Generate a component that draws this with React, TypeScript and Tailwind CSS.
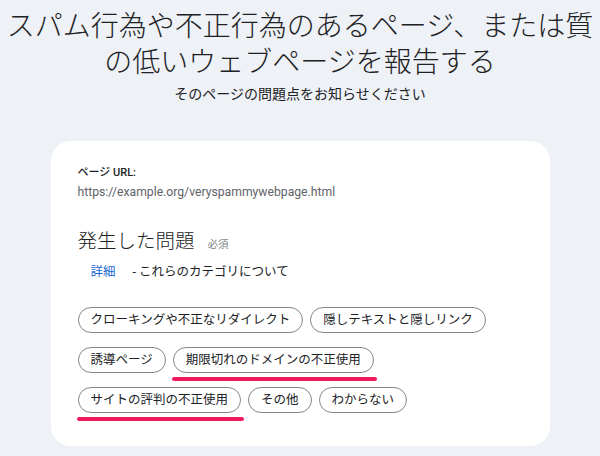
const categories = [
    { label: 'クローキングや不正なリダイレクト' },
    { label: '隠しテキストと隠しリンク' },
    { label: '誘導ページ' },
    { label: '期限切れのドメインの不正使用', marked: true },
    { label: 'サイトの評判の不正使用', marked: true },
    { label: 'その他' },
    { label: 'わからない' },
];

function Chip({ label, marked }: { label: string; marked?: boolean }) {
    return (
        <span className="relative">
            <button className="h-[26px] rounded-full border border-[#80868b] bg-white px-[12px] text-[12.5px] leading-[24px] text-[#202124]">
                {label}
            </button>
            {marked && (
                <span className="absolute -left-[1px] -right-[3px] top-full mt-[4px] h-[3.5px] rounded-full bg-[#f2185c]" />
            )}
        </span>
    );
}

export default function App() {
    return (
        <div className="h-[456px] w-full overflow-hidden bg-[#eef1f6] font-['Roboto','Noto_Sans_CJK_JP',sans-serif] text-[#202124]">
            <h1 className="pt-[6px] text-center font-['Noto_Sans_CJK_JP',sans-serif] text-[28px] font-light leading-[36px]">
                スパム行為や不正行為のあるページ、または質の低いウェブページを報告する
            </h1>
            <p className="mt-[5px] text-center font-['Noto_Sans_CJK_JP',sans-serif] text-[14px] leading-[20px]">
                そのページの問題点をお知らせください
            </p>

            <div className="mx-auto mt-[38px] w-[499px] rounded-[20px] bg-white pb-[33px] pl-[27px] pr-[27px] pt-[24px]">
                <div className="text-[11px] font-medium leading-[16px]">ページ URL:</div>
                <div className="mt-[2px] text-[12.2px] leading-[18px] text-[#5f6368]">
                    https://example.org/veryspammywebpage.html
                </div>

                <div className="mt-[25px] flex items-baseline">
                    <h2 className="font-['Noto_Sans_CJK_JP',sans-serif] text-[19.5px] font-light leading-[28px]">
                        発生した問題
                    </h2>
                    <span className="ml-[13px] text-[10.5px] text-[#80868b]">必須</span>
                </div>

                <div className="mt-[9px] flex text-[12.5px] leading-[18px]">
                    <a className="ml-[13px] mr-[17px] text-[#1a66d9]">詳細</a>
                    <span>- これらのカテゴリについて</span>
                </div>

                <div className="mt-[26px] flex flex-wrap gap-x-[7px] gap-y-[14px]">
                    {categories.map((c) => (
                        <Chip key={c.label} label={c.label} marked={c.marked} />
                    ))}
                </div>
            </div>
        </div>
    );
}
